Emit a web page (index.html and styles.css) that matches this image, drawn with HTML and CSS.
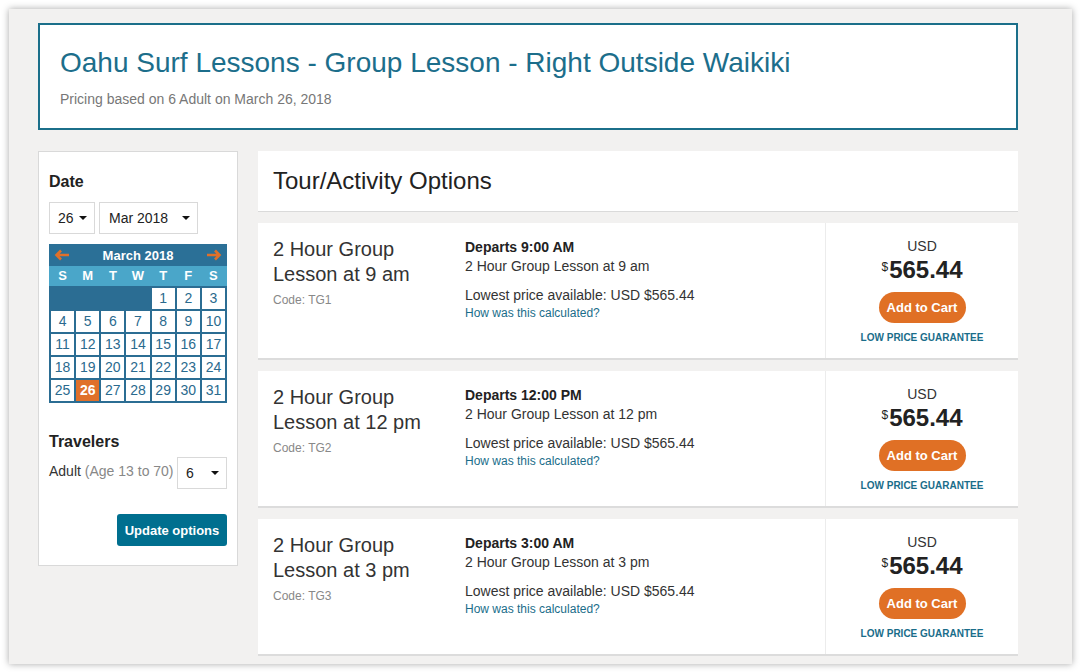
FILE: index.html
```html
<!DOCTYPE html>
<html>
<head>
<meta charset="utf-8">
<link rel="stylesheet" href="styles.css">
</head>
<body>
<div class="window">
  <header class="hero">
    <h1 class="hero-title">Oahu Surf Lessons - Group Lesson - Right Outside Waikiki</h1>
    <p class="hero-sub">Pricing based on 6 Adult on March 26, 2018</p>
  </header>
  <div class="main">
    <aside class="sidebar">
      <h3 class="side-label">Date</h3>
      <div class="date-selects">
        <div class="select sel-day"><span>26</span><span class="caret"></span></div>
        <div class="select sel-month"><span>Mar 2018</span><span class="caret"></span></div>
      </div>
      <div class="cal">
        <div class="cal-head">
          <svg class="arrow" width="16" height="12" viewBox="0 0 16 12"><path d="M15 6H3M7 1.5L2.5 6L7 10.5" fill="none" stroke="#e0702a" stroke-width="2.6"/></svg>
          <span class="cal-month">March 2018</span>
          <svg class="arrow" width="16" height="12" viewBox="0 0 16 12"><path d="M1 6H13M9 1.5L13.5 6L9 10.5" fill="none" stroke="#e0702a" stroke-width="2.6"/></svg>
        </div>
        <div class="cal-dow"><span>S</span><span>M</span><span>T</span><span>W</span><span>T</span><span>F</span><span>S</span></div>
        <div class="cal-grid">
          <span class="blank blank4"></span>
          <span>1</span><span>2</span><span>3</span>
          <span>4</span><span>5</span><span>6</span><span>7</span><span>8</span><span>9</span><span>10</span>
          <span>11</span><span>12</span><span>13</span><span>14</span><span>15</span><span>16</span><span>17</span>
          <span>18</span><span>19</span><span>20</span><span>21</span><span>22</span><span>23</span><span>24</span>
          <span>25</span><span class="sel">26</span><span>27</span><span>28</span><span>29</span><span>30</span><span>31</span>
        </div>
      </div>
      <h3 class="side-label trav">Travelers</h3>
      <div class="trav-row">
        <span class="trav-text">Adult <span class="muted">(Age 13 to 70)</span></span>
        <div class="select sel-count"><span>6</span><span class="caret"></span></div>
      </div>
      <div class="btn-row"><button class="update-btn">Update options</button></div>
    </aside>
    <section class="options">
      <div class="opt-title">Tour/Activity Options</div>
      <div class="opt-row">
        <div class="opt-name">
          <div class="name">2 Hour Group<br>Lesson at 9 am</div>
          <div class="code">Code: TG1</div>
        </div>
        <div class="opt-info">
          <div class="dep">Departs 9:00 AM</div>
          <div class="dep-sub">2 Hour Group Lesson at 9 am</div>
          <div class="lowest">Lowest price available: USD $565.44</div>
          <a class="calc">How was this calculated?</a>
        </div>
        <div class="opt-price">
          <div class="cur">USD</div>
          <div class="price"><sup>$</sup>565.44</div>
          <button class="cart-btn">Add to Cart</button>
          <div class="lpg">LOW PRICE GUARANTEE</div>
        </div>
      </div>
      <div class="opt-row">
        <div class="opt-name">
          <div class="name">2 Hour Group<br>Lesson at 12 pm</div>
          <div class="code">Code: TG2</div>
        </div>
        <div class="opt-info">
          <div class="dep">Departs 12:00 PM</div>
          <div class="dep-sub">2 Hour Group Lesson at 12 pm</div>
          <div class="lowest">Lowest price available: USD $565.44</div>
          <a class="calc">How was this calculated?</a>
        </div>
        <div class="opt-price">
          <div class="cur">USD</div>
          <div class="price"><sup>$</sup>565.44</div>
          <button class="cart-btn">Add to Cart</button>
          <div class="lpg">LOW PRICE GUARANTEE</div>
        </div>
      </div>
      <div class="opt-row">
        <div class="opt-name">
          <div class="name">2 Hour Group<br>Lesson at 3 pm</div>
          <div class="code">Code: TG3</div>
        </div>
        <div class="opt-info">
          <div class="dep">Departs 3:00 AM</div>
          <div class="dep-sub">2 Hour Group Lesson at 3 pm</div>
          <div class="lowest">Lowest price available: USD $565.44</div>
          <a class="calc">How was this calculated?</a>
        </div>
        <div class="opt-price">
          <div class="cur">USD</div>
          <div class="price"><sup>$</sup>565.44</div>
          <button class="cart-btn">Add to Cart</button>
          <div class="lpg">LOW PRICE GUARANTEE</div>
        </div>
      </div>
    </section>
  </div>
</div>
</body>
</html>
```

FILE: styles.css
```css
* { box-sizing: border-box; }
html, body { margin: 0; padding: 0; background: #fff; }
body {
  font-family: "Liberation Sans", Arial, sans-serif;
  color: #333;
  width: 1080px;
  height: 672px;
  overflow: hidden;
}
.window {
  margin: 9px 0 0 9px;
  width: 1063px;
  height: 655px;
  background: #f2f1f0;
  box-shadow: 0 0 7px rgba(0,0,0,0.35);
  padding: 14px 0 0 29px;
  overflow: hidden;
}
.hero {
  width: 980px;
  height: 107px;
  background: #fff;
  border: 2px solid #1b6f8a;
  padding: 22px 20px 0 20px;
}
.hero-title {
  margin: 0;
  font-weight: normal;
  font-size: 28px;
  line-height: 32px;
  color: #1c6e8b;
}
.hero-sub {
  margin: 12px 0 0 0;
  font-size: 14px;
  line-height: 16px;
  color: #777;
}
.main {
  display: flex;
  gap: 20px;
  margin-top: 21px;
  align-items: flex-start;
}
.sidebar {
  width: 200px;
  background: #fff;
  border: 1px solid #d9d9d9;
  padding: 20px 10px 19px 10px;
}
.side-label {
  margin: 0;
  font-size: 16px;
  line-height: 20px;
  font-weight: bold;
  color: #222;
}
.date-selects {
  display: flex;
  gap: 4px;
  margin-top: 10px;
}
.select {
  height: 32px;
  border: 1px solid #d9d9d9;
  display: flex;
  align-items: center;
  justify-content: space-between;
  font-size: 14px;
  color: #222;
  background: #fff;
}
.sel-day { width: 46px; padding: 0 7px 0 8px; }
.sel-month { width: 99px; padding: 0 7px 0 9px; }
.sel-count { width: 50px; padding: 0 7px 0 8px; }
.caret {
  width: 0; height: 0;
  border-left: 4px solid transparent;
  border-right: 4px solid transparent;
  border-top: 4px solid #111;
}
.cal {
  margin-top: 10px;
  width: 178px;
  background: #25698f;
}
.cal-head {
  height: 22px;
  display: flex;
  align-items: center;
  justify-content: space-between;
  padding: 0 5px 0 5px;
  background: #2b7097;
}
.cal-month {
  color: #fff;
  font-weight: bold;
  font-size: 13px;
}
.cal-dow {
  height: 20px;
  background: #4aa6c9;
  display: grid;
  grid-template-columns: repeat(7, 1fr);
  padding: 0 1px;
}
.cal-dow span {
  text-align: center;
  color: #fff;
  font-weight: bold;
  font-size: 13px;
  line-height: 20px;
}
.cal-grid {
  display: grid;
  grid-template-columns: repeat(7, 1fr);
  gap: 2px;
  padding: 2px;
  background: #2b6d93;
}
.cal-grid span {
  background: #fff;
  height: 21px;
  line-height: 21px;
  text-align: center;
  font-size: 14px;
  color: #2a6a8e;
}
.cal-grid span.blank { background: transparent; }
.cal-grid span.blank4 { grid-column: span 4; }
.cal-grid span.sel {
  background: #e0702a;
  color: #fff;
  font-weight: bold;
}
.side-label.trav { margin-top: 29px; }
.trav-row {
  display: flex;
  justify-content: space-between;
  align-items: flex-start;
  margin-top: 5px;
}
.trav-text {
  font-size: 14px;
  color: #333;
  margin-top: 6px;
}
.muted { color: #888; }
.btn-row {
  display: flex;
  justify-content: flex-end;
  margin-top: 25px;
}
.update-btn {
  width: 110px;
  height: 32px;
  border: none;
  border-radius: 3px;
  background: #006f8f;
  color: #fff;
  font-family: "Liberation Sans", Arial, sans-serif;
  font-weight: bold;
  font-size: 13px;
  padding: 0;
}
.options {
  width: 760px;
  display: flex;
  flex-direction: column;
  gap: 11px;
}
.opt-title {
  height: 61px;
  background: #fff;
  border-bottom: 1px solid #dadada;
  padding: 16px 15px 0 15px;
  font-size: 24px;
  line-height: 28px;
  color: #222;
}
.opt-row {
  height: 137px;
  background: #fff;
  border-bottom: 2px solid #dcdcdc;
  display: flex;
}
.opt-name {
  width: 207px;
  padding: 14px 15px 0 15px;
}
.name {
  font-size: 20px;
  line-height: 25px;
  color: #333;
}
.code {
  margin-top: 6px;
  font-size: 12px;
  line-height: 14px;
  color: #888;
}
.opt-info {
  width: 360px;
  padding: 15px 0 0 0;
  font-size: 14px;
  line-height: 19px;
  color: #333;
}
.dep { font-weight: bold; color: #222; }
.lowest { margin-top: 10px; }
.calc {
  display: block;
  font-size: 12px;
  line-height: 17px;
  color: #1a6d8a;
}
.opt-price {
  flex: 1;
  border-left: 1px solid #ececec;
  display: flex;
  flex-direction: column;
  align-items: center;
  padding-top: 15px;
}
.cur {
  font-size: 14px;
  line-height: 17px;
  color: #333;
}
.price {
  font-size: 24px;
  line-height: 29px;
  font-weight: bold;
  color: #222;
}
.price sup {
  font-size: 12px;
  font-weight: normal;
  vertical-align: top;
  position: relative;
  top: -2px;
  margin-right: 1px;
}
.cart-btn {
  margin-top: 8px;
  width: 87px;
  height: 31px;
  border: none;
  border-radius: 16px;
  background: #e07025;
  color: #fff;
  font-family: "Liberation Sans", Arial, sans-serif;
  font-weight: bold;
  font-size: 13px;
  padding: 0;
}
.lpg {
  margin-top: 9px;
  font-size: 10px;
  font-weight: bold;
  color: #1a6d8a;
}
```
